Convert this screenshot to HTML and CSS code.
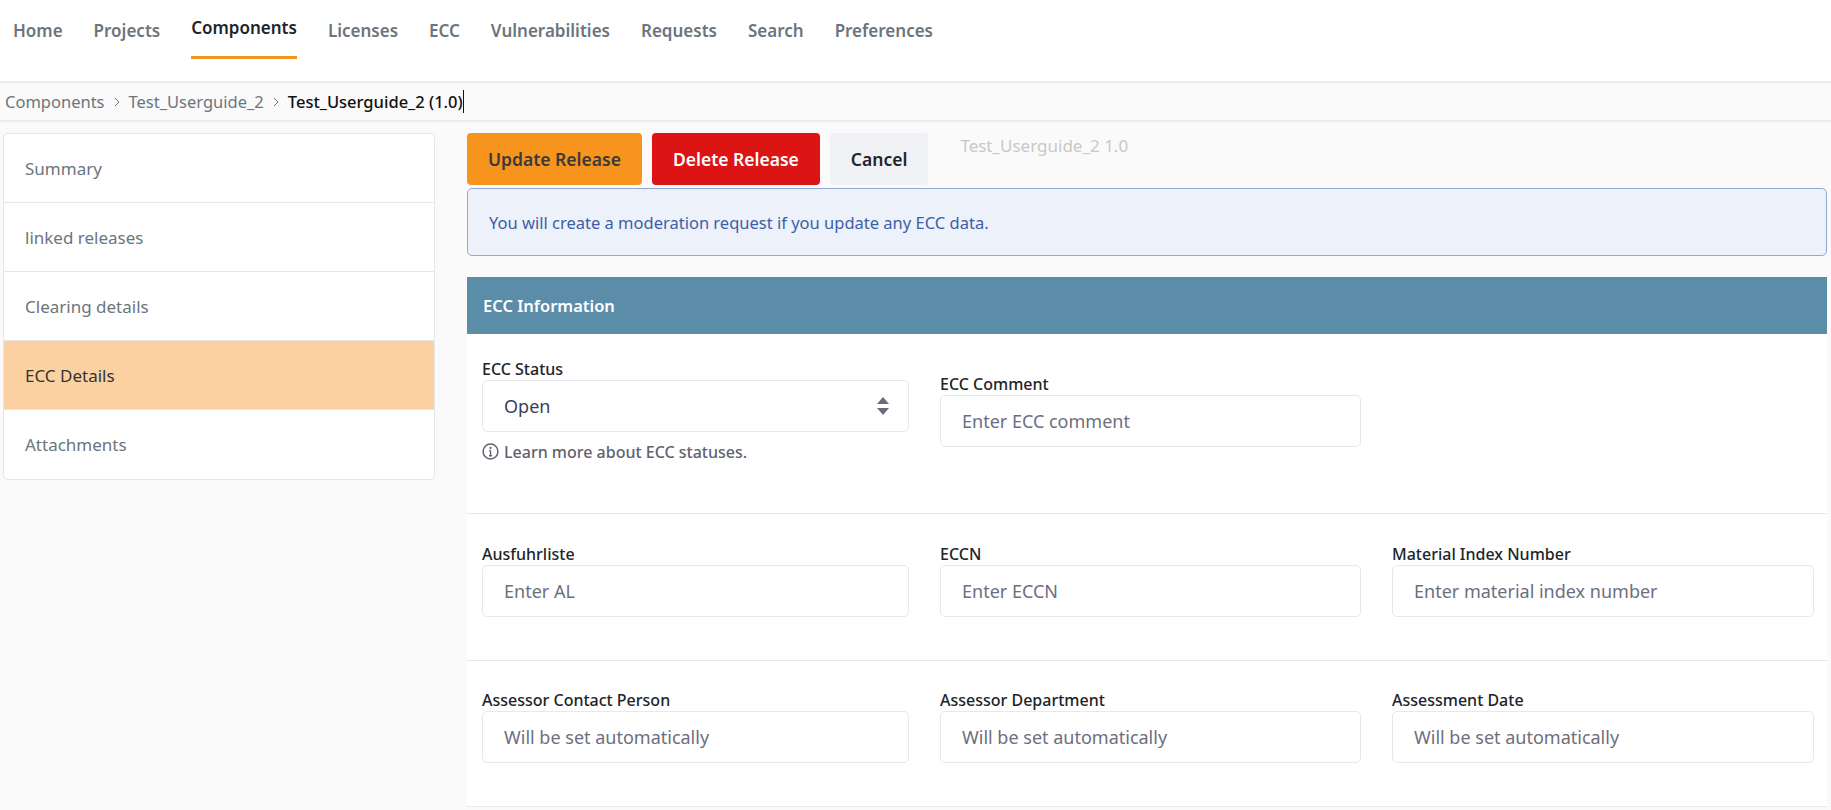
FILE: index.html
```html
<!DOCTYPE html>
<html lang="en">
<head>
<meta charset="utf-8">
<title>Test_Userguide_2 (1.0)</title>
<link rel="stylesheet" href="styles.css">
</head>
<body>
<header class="topbar">
  <nav class="nav">
    <a class="nav-item">Home</a>
    <a class="nav-item">Projects</a>
    <a class="nav-item active">Components</a>
    <a class="nav-item">Licenses</a>
    <a class="nav-item">ECC</a>
    <a class="nav-item">Vulnerabilities</a>
    <a class="nav-item">Requests</a>
    <a class="nav-item">Search</a>
    <a class="nav-item">Preferences</a>
  </nav>
</header>
<div class="breadcrumb">
  <span>Components</span>
  <svg class="crumb-sep" viewBox="0 0 8 12"><path d="M2 2l4 4-4 4" fill="none" stroke="currentColor" stroke-width="1"/></svg>
  <span>Test_Userguide_2</span>
  <svg class="crumb-sep" viewBox="0 0 8 12"><path d="M2 2l4 4-4 4" fill="none" stroke="currentColor" stroke-width="1"/></svg>
  <span class="crumb-current">Test_Userguide_2 (1.0)</span>
</div>
<div class="page">
  <aside class="side">
    <div class="side-item">Summary</div>
    <div class="side-item">linked releases</div>
    <div class="side-item">Clearing details</div>
    <div class="side-item selected">ECC Details</div>
    <div class="side-item">Attachments</div>
  </aside>
  <main class="content">
    <div class="actions">
      <button class="btn btn-update">Update Release</button>
      <button class="btn btn-delete">Delete Release</button>
      <button class="btn btn-cancel">Cancel</button>
      <span class="doc-title">Test_Userguide_2 1.0</span>
    </div>
    <div class="alert">You will create a moderation request if you update any ECC data.</div>
    <section class="panel">
      <h2 class="panel-head">ECC Information</h2>
      <div class="form-row row-first">
        <div class="field">
          <label class="label">ECC Status</label>
          <div class="select">
            <span>Open</span>
            <svg class="select-arrows" viewBox="0 0 12 18"><path d="M6 0l6 7H0zM6 18l6-7H0z" fill="#6b6b80"/></svg>
          </div>
          <div class="hint">
            <svg class="hint-icon" viewBox="0 0 16 16"><circle cx="8" cy="8" r="7" fill="none" stroke="#5f6270" stroke-width="1.4"/><path d="M8 7v5M6.6 12h2.8M6.8 7h1.2" fill="none" stroke="#5f6270" stroke-width="1.3"/><circle cx="8" cy="4.6" r="1" fill="#5f6270"/></svg>
            <span>Learn more about ECC statuses.</span>
          </div>
        </div>
        <div class="field">
          <label class="label">ECC Comment</label>
          <input class="input" placeholder="Enter ECC comment">
        </div>
        <div class="field"></div>
      </div>
      <div class="form-row row-second">
        <div class="field">
          <label class="label">Ausfuhrliste</label>
          <input class="input" placeholder="Enter AL">
        </div>
        <div class="field">
          <label class="label">ECCN</label>
          <input class="input" placeholder="Enter ECCN">
        </div>
        <div class="field">
          <label class="label">Material Index Number</label>
          <input class="input" placeholder="Enter material index number">
        </div>
      </div>
      <div class="form-row row-third">
        <div class="field">
          <label class="label">Assessor Contact Person</label>
          <input class="input" placeholder="Will be set automatically">
        </div>
        <div class="field">
          <label class="label">Assessor Department</label>
          <input class="input" placeholder="Will be set automatically">
        </div>
        <div class="field">
          <label class="label">Assessment Date</label>
          <input class="input" placeholder="Will be set automatically">
        </div>
      </div>
    </section>
  </main>
</div>
</body>
</html>
```
FILE: styles.css
```css
* { box-sizing: border-box; }
html, body { height: 100%; }
body {
  margin: 0;
  background: #fafafa;
  color: #212529;
  font-family: "Noto Sans", "Open Sans", sans-serif;
  font-size: 17px;
  overflow: hidden;
}
.topbar {
  height: 83px;
  background: #fff;
  border-bottom: 2px solid #ececec;
  padding-left: 13px;
}
.nav { display: flex; gap: 31px; height: 100%; }
.nav-item {
  height: 59px;
  padding-top: 19px;
  font-size: 17px;
  font-weight: 600;
  color: #6c757d;
  line-height: 24px;
}
.nav-item.active {
  padding-top: 16px;
  color: #212529;
  border-bottom: 3px solid #f7941d;
}
.breadcrumb {
  height: 39px;
  display: flex;
  align-items: center;
  padding-left: 5px;
  gap: 8px;
  background: #fafafa;
  border-bottom: 2px solid #ececec;
  color: #6c757d;
  font-size: 16.5px;
}
.crumb-sep { width: 8px; height: 12px; }
.crumb-current {
  color: #111;
  font-weight: 500;
  border-right: 1px solid #111;
}
.page { display: flex; align-items: flex-start; padding: 11px 4px 0 3px; gap: 32px; }
.side {
  width: 432px;
  flex: none;
  background: #fff;
  border: 1px solid #e6e6ea;
  border-radius: 5px;
  overflow: hidden;
}
.side-item {
  height: 69px;
  padding-left: 21px;
  display: flex;
  align-items: center;
  color: #6c757d;
  font-size: 17px;
  border-bottom: 1px solid #e6e6ea;
}
.side-item:last-child { border-bottom: 0; }
.side-item.selected { background: #fbd1a2; color: #333; }
.content { flex: 1; min-width: 0; }
.actions { display: flex; align-items: flex-start; gap: 10px; }
.btn {
  height: 52px;
  padding: 0 21px;
  border: 0;
  border-radius: 4px;
  font-family: inherit;
  font-size: 17.5px;
  font-weight: 600;
}
.btn-update { background: #f7941d; color: #3a3a3a; }
.btn-delete { background: #dc1414; color: #fff; }
.btn-cancel { background: #f0f1f5; color: #212529; }
.doc-title { margin-left: 22px; margin-top: 1px; color: #c8c8c8; font-size: 17px; }
.alert {
  height: 68px;
  margin-top: 3px;
  padding-left: 21px;
  display: flex;
  align-items: center;
  background: #edf1fa;
  border: 1px solid #8fa8d8;
  border-radius: 5px;
  color: #3c5fa5;
  font-size: 16.5px;
}
.panel { margin-top: 21px; background: #fff; }
.panel-head {
  margin: 0;
  height: 57px;
  padding-left: 16px;
  display: flex;
  align-items: center;
  background: #5b8da9;
  color: #fff;
  font-size: 16.5px;
  font-weight: 600;
}
.form-row {
  display: grid;
  grid-template-columns: 427px 421px 422px;
  column-gap: 31px;
  padding-left: 15px;
  border-bottom: 1px solid #e8e8ec;
}
.row-first { height: 180px; align-items: center; padding-bottom: 26px; }
.row-second { height: 147px; padding-top: 30px; }
.row-third { height: 146px; padding-top: 29px; }
.label {
  display: block;
  height: 20px;
  margin-bottom: 1px;
  font-size: 16px;
  line-height: 20px;
  font-weight: 500;
  color: #212529;
}
.input, .select {
  width: 100%;
  height: 52px;
  padding: 0 21px;
  background: #fff;
  border: 1px solid #e8e8ec;
  border-radius: 5px;
  font-family: inherit;
  font-size: 18px;
}
.input::placeholder { color: #6c6f80; opacity: 1; }
.select {
  display: flex;
  align-items: center;
  justify-content: space-between;
  padding-right: 19px;
  color: #3a3f55;
}
.select-arrows { width: 12px; height: 18px; }
.hint {
  display: flex;
  align-items: center;
  gap: 5px;
  margin-top: 9px;
  color: #5f6270;
  font-size: 16px;
  font-weight: 500;
}
.hint-icon { width: 17px; height: 17px; }
```
